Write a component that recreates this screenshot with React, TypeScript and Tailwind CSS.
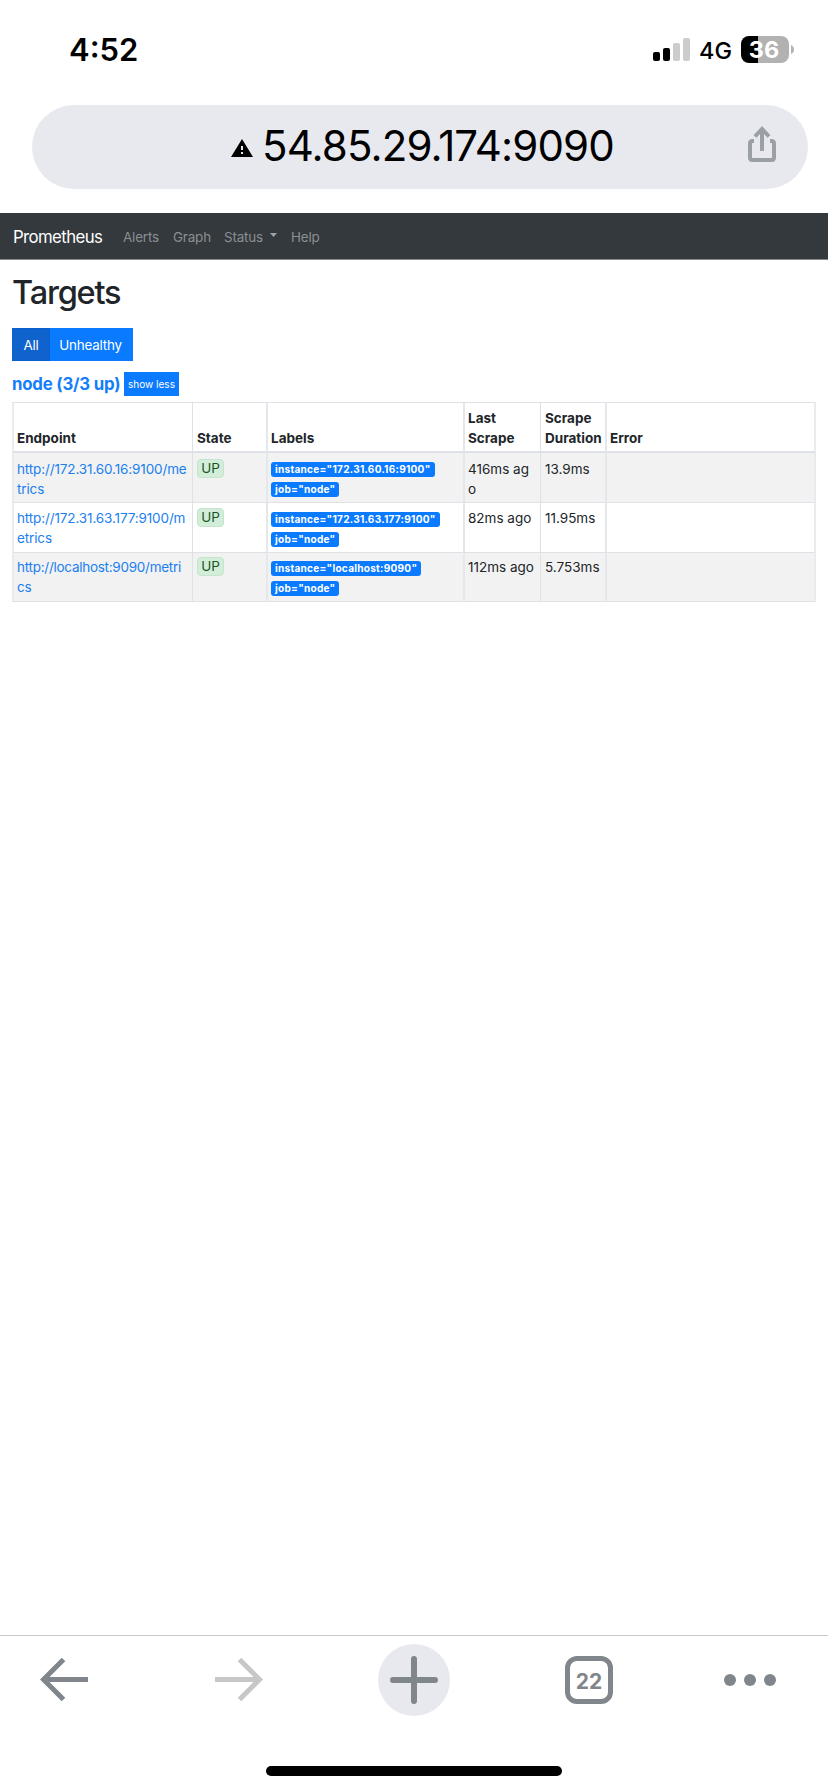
import React from 'react';

type Target = {
  url: [string, string];
  instance: string;
  scrape: string[];
  duration: string;
  striped: boolean;
  height: string;
  linkTracking: string;
  pad: string;
};

const targets: Target[] = [
  { url: ['http://172.31.60.16:9100/me', 'trics'], instance: '172.31.60.16:9100', scrape: ['416ms ag', 'o'], duration: '13.9ms', striped: true, height: 'h-[50px]', linkTracking: 'tracking-[-0.13px]', pad: 'pt-[5.5px]' },
  { url: ['http://172.31.63.177:9100/m', 'etrics'], instance: '172.31.63.177:9100', scrape: ['82ms ago'], duration: '11.95ms', striped: false, height: 'h-[50px]', linkTracking: 'tracking-[-0.13px]', pad: 'pt-[5px]' },
  { url: ['http://localhost:9090/metri', 'cs'], instance: 'localhost:9090', scrape: ['112ms ago'], duration: '5.753ms', striped: true, height: 'h-[49px]', linkTracking: 'tracking-[-0.27px]', pad: 'pt-[4px]' },
];

const edges = [
  'border-l-2 border-l-[#e9ecef] pl-[3px]',
  'border-l border-l-[#dee2e6] pl-1',
  'border-l-2 border-l-[#e4e7ec] pl-[3px]',
  'border-l-2 border-l-[#e4e7ec] pl-[3px]',
  'border-l border-l-[#dee2e6] pl-1',
  'border-l-2 border-r-2 border-l-[#e4e7ec] border-r-[#e9ecef] pl-[3px]',
];

const headings: string[][] = [['Endpoint'], ['State'], ['Labels'], ['Last', 'Scrape'], ['Scrape', 'Duration'], ['Error']];

function StatusBar() {
  return (
    <div className="flex h-[105px] items-start pl-[69px] pr-[34px] pt-[36px]">
      <span className="mt-[-2px] text-[31px] font-semibold leading-[32px]">4:52</span>
      <div className="ml-auto flex h-[27px]">
        <svg width="38" height="27" viewBox="0 0 38 27">
          <rect x="0" y="16" width="7" height="9" rx="2" />
          <rect x="10" y="12" width="7" height="13" rx="2" />
          <rect x="20" y="7" width="7" height="18" rx="2" fill="#ccc" />
          <rect x="30" y="2" width="7" height="23" rx="2" fill="#ccc" />
        </svg>
        <span className="ml-[8px] w-[42px] text-[23.5px] font-medium leading-[29px]">4G</span>
        <div className="flex h-[27px] w-[48px] items-center justify-center rounded-[8px] bg-[linear-gradient(90deg,#000_0_17px,#b2b2b2_17px)] pr-[2px] text-[23.5px] font-bold leading-none text-white">
          36
        </div>
        <svg className="ml-[2px] mt-[9px]" width="3" height="9" viewBox="0 0 3 9">
          <path d="M0 0q3 1.5 3 4.5T0 9z" fill="#b2b2b2" />
        </svg>
      </div>
    </div>
  );
}

function AddressBar() {
  return (
    <div className="ml-8 mr-5 flex h-[84px] items-center rounded-full bg-[#e8e9ee] pl-[199px] pr-[32px]">
      <svg className="mt-[2px]" width="22" height="18" viewBox="0 0 22 18">
        <path d="M11 0L22 18H0z" />
        <path d="M10 7h2v4h-2zM10 13h2v2h-2z" fill="#e8e9ee" />
      </svg>
      <span className="ml-[9px] mt-[-3px] whitespace-nowrap text-[42px] leading-[52px] tracking-[-0.87px]">54.85.29.174:9090</span>
      <svg className="mb-[6px] ml-auto" width="28" height="36" viewBox="0 0 28 36" fill="none" stroke="#9aa0a6" strokeWidth="4">
        <path d="M6 15H4.500Q2 15 2 17.500v14Q2 34 4.500 34h19Q26 34 26 31.500v-14Q26 15 23.500 15H22M14 25V3M7 10.500L14 3l7 7.500" />
      </svg>
    </div>
  );
}

function Navbar() {
  return (
    <nav className="mt-6 flex h-[47px] items-center border-b border-[#85898d] bg-[#33393d] pl-[13px] pt-[3px] text-[13.4px] tracking-[-0.15px] text-[#8b8f92]">
      <span className="w-[110px] text-[16.8px] tracking-[-0.6px] text-white">Prometheus</span>
      <span className="w-[50px]">Alerts</span>
      <span className="w-[51px]">Graph</span>
      <span className="w-[46px]">Status</span>
      <svg className="mr-[14px] mt-[-5px]" width="7" height="4" viewBox="0 0 7 4"><path d="M0 0h7L3.500 4z" fill="#a0a3a6" /></svg>
      <span>Help</span>
    </nav>
  );
}

function TargetTable() {
  return (
    <table className="mt-[6px] w-[804px] table-fixed border-separate border-spacing-0 text-[13.5px] leading-[20.3px]">
      <colgroup>
        <col className="w-[180px]" />
        <col className="w-[74px]" />
        <col className="w-[197px]" />
        <col className="w-[77px]" />
        <col className="w-[65px]" />
        <col className="w-[211px]" />
      </colgroup>
      <thead>
        <tr className="h-[51px] text-left align-bottom">
          {headings.map((lines, i) => (
            <th key={lines.join(' ')} className={`border-b-2 border-t border-b-[#dee2e6] border-t-[#dee2e6] pb-[2.5px] font-bold ${edges[i]}`}>
              {lines.map((line) => <div key={line}>{line}</div>)}
            </th>
          ))}
        </tr>
      </thead>
      <tbody>
        {targets.map((t) => {
          const cell = (i: number) => `border-b border-b-[#dee2e6] whitespace-nowrap ${t.pad} ${edges[i]} ${t.striped ? 'bg-[#f2f2f2]' : 'bg-white'}`;
          return (
            <tr key={t.instance} className={`align-top ${t.height}`}>
              <td className={`${cell(0)} ${t.linkTracking} text-[#1a80f0]`}>{t.url.map((l) => <div key={l}>{l}</div>)}</td>
              <td className={cell(1)}>
                <div className="flex h-[19px] w-[27px] items-center justify-center rounded-[4px] border border-[#c3e6cb] bg-[#d4edda] text-[#155724]">UP</div>
              </td>
              <td className={cell(2)}>
                <div className="flex flex-col items-start gap-[5px] pt-[3.500px] text-[10.1px] font-bold leading-[15px] tracking-[0.25px] text-white">
                  <span className="rounded-[3px] bg-[#0a7aff] px-1">{`instance="${t.instance}"`}</span>
                  <span className="rounded-[3px] bg-[#0a7aff] px-1">job="node"</span>
                </div>
              </td>
              <td className={cell(3)}>{t.scrape.map((l) => <div key={l}>{l}</div>)}</td>
              <td className={cell(4)}>{t.duration}</td>
              <td className={cell(5)} />
            </tr>
          );
        })}
      </tbody>
    </table>
  );
}

function Toolbar() {
  return (
    <footer className="mt-auto flex h-[157px] flex-col border-t border-[#c6c8ca]">
      <div className="flex h-[88px] items-center pl-[40px] pr-[52px]">
        <svg className="mt-[-1px]" width="48" height="43" viewBox="0 0 48 43" fill="none" stroke="#80868b" strokeWidth="5">
          <path d="M48 21.500H4M23.500 1.500L3.500 21.500l20 20" />
        </svg>
        <svg className="ml-[127px] mt-[-1px]" width="48" height="43" viewBox="0 0 48 43" fill="none" stroke="#c7c7c7" strokeWidth="5">
          <path d="M0 21.500h44M24.500 1.500l20 20-20 20" />
        </svg>
        <div className="ml-[115px] flex h-[72px] w-[72px] items-center justify-center rounded-full bg-[#e8e9ee]">
          <svg width="48" height="48" viewBox="0 0 48 48" stroke="#80868b" strokeWidth="6" strokeLinecap="round">
            <path d="M24 3v42M3 24h42" />
          </svg>
        </div>
        <div className="ml-[115px] flex h-[48px] w-[48px] items-center justify-center rounded-[12px] border-[5px] border-[#80868b] pt-[2px] text-[21px] font-bold leading-none text-[#80868b]">22</div>
        <svg className="ml-auto" width="52" height="12" viewBox="0 0 52 12" fill="#80868b">
          <circle cx="6" cy="6" r="6" />
          <circle cx="26" cy="6" r="6" />
          <circle cx="46" cy="6" r="6" />
        </svg>
      </div>
      <div className="mx-auto mt-[42px] h-[10px] w-[296px] rounded-full bg-black" />
    </footer>
  );
}

export default function App() {
  return (
    <div className="flex h-[1792px] w-[828px] flex-col overflow-hidden bg-white font-['Inter','Liberation_Sans',sans-serif] text-black">
      <StatusBar />
      <AddressBar />
      <Navbar />
      <main className="pl-[12px] text-[#212529]">
        <h1 className="mt-[13px] text-[32.5px] font-medium leading-[40px] tracking-[-1.2px]">Targets</h1>
        <div className="mt-[15px] flex h-[33px] w-[121px] text-[13.4px] tracking-[-0.2px] text-white">
          <button className="w-[38px] border border-[#0b5ed0] bg-[#1062cc] pt-px">All</button>
          <button className="flex-1 bg-[#0a7aff] pr-[2px] pt-px">Unhealthy</button>
        </div>
        <div className="mt-[11px] flex h-[24px] items-center">
          <h2 className="w-[112px] whitespace-nowrap text-[16.8px] font-bold leading-[24px] tracking-[-0.2px] text-[#147efb]">node (3/3 up)</h2>
          <button className="h-[24px] w-[55px] whitespace-nowrap bg-[#0a7aff] text-[10px] text-white">show less</button>
        </div>
        <TargetTable />
      </main>
      <Toolbar />
    </div>
  );
}
